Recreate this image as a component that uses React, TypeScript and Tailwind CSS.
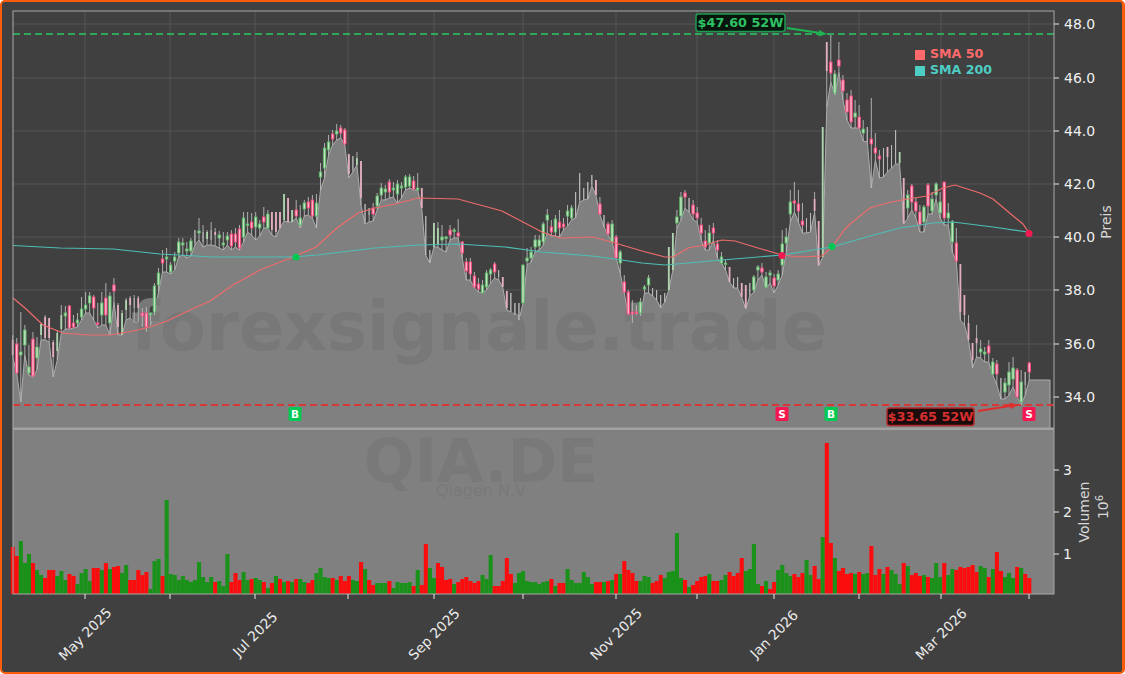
const C: number[][] = [
[340,355,335,357,3],[344,373,338,374,1],[352,355,312,402,0],[330,345,325,355,0],[367,373,345,375,0],[339,376,332,377,1],[347,358,337,370,0],[324,335,323,340,2],[317,338,315,340,3],[318,338,318,342,3],
[342,357,340,377,3],[333,351,330,360,2],[315,329,305,333,2],[313,316,306,329,0],[306,328,305,329,1],[323,327,315,328,1],[320,323,313,327,0],[309,317,297,320,0],[305,309,292,313,0],[296,303,292,313,0],
[297,308,295,320,1],[323,324,303,328,1],[303,315,292,325,0],[298,315,283,325,1],[296,323,292,335,0],[285,291,278,302,1],[305,327,303,335,3],[313,335,310,335,2],[300,310,298,320,2],[298,305,296,318,3],
[298,308,295,322,4],[298,308,296,322,3],[313,316,308,327,1],[313,327,307,332,1],[313,315,313,325,0],[286,312,283,315,0],[273,285,268,292,0],[259,263,250,272,1],[257,259,248,272,0],[265,272,262,274,0],
[257,261,252,270,0],[242,253,238,257,0],[243,245,238,255,0],[249,251,242,258,0],[241,251,238,256,0],[230,243,230,245,4],[231,233,218,240,0],[232,242,225,247,4],[232,239,230,245,2],[230,240,222,245,4],
[232,235,228,246,3],[235,238,231,248,0],[243,245,232,250,0],[236,240,232,245,0],[234,246,230,250,1],[234,242,228,247,1],[229,248,225,250,1],[218,237,212,242,0],[224,225,212,232,0],[222,228,213,235,1],
[217,227,212,240,0],[224,228,220,236,0],[217,222,207,228,1],[214,228,210,228,0],[212,230,212,235,3],[212,232,212,237,3],[212,228,212,228,3],[194,220,194,221,2],[198,222,198,222,3],[210,222,210,222,2],
[210,216,200,218,1],[218,225,205,228,0],[203,209,200,216,0],[202,208,197,215,1],[200,216,195,218,1],[203,216,194,228,0],[172,177,163,190,0],[148,168,143,178,0],[142,150,135,155,0],[134,139,130,145,1],
[131,134,124,140,0],[128,133,125,138,1],[130,144,128,145,1],[154,174,154,178,3],[156,170,156,172,4],[158,165,152,165,2],[161,198,161,205,3],[204,222,204,224,4],[208,215,208,222,4],[208,214,203,221,1],
[196,206,193,210,0],[188,195,183,200,0],[189,192,185,200,0],[182,192,179,198,1],
[188,190,182,197,0],[184,194,180,203,0],[186,188,182,198,0],[177,187,175,190,0],[177,186,174,188,0],[181,189,176,190,1],[188,190,173,190,0],[188,208,188,208,3],[216,255,216,255,4],[250,263,250,263,4],
[223,247,223,247,2],[228,245,222,247,2],[237,240,225,250,0],[237,238,236,252,0],[230,235,225,240,1],[230,231,228,238,0],[233,236,219,238,1],[242,253,241,258,1],[262,271,258,280,1],[262,274,258,280,1],
[276,287,272,288,1],[284,289,278,292,1],[285,293,280,293,0],[273,287,270,290,0],[270,274,268,283,0],[264,272,262,278,1],[270,277,270,280,4],[277,287,277,287,3],[291,308,291,310,3],[293,312,293,312,4],
[303,315,303,315,4],[303,320,303,320,4],[265,303,265,303,0],[258,261,248,265,0],[252,258,247,262,0],[240,247,235,252,0],[240,246,235,250,0],[224,242,222,245,0],[215,220,209,233,0],[227,232,220,236,1],
[219,232,215,236,0],[222,228,210,237,1],[224,227,218,230,1],[211,216,205,226,0],[208,218,205,220,0],[192,218,192,218,4],[173,200,173,202,4],[188,200,188,200,4],[182,199,182,199,4],[175,185,175,186,4],
[180,195,180,195,3],[204,214,197,215,1],[215,227,215,227,4],[224,234,222,235,1],[224,242,220,242,0],[237,258,235,258,1],[252,263,250,273,0],[282,292,275,293,1],[292,314,290,315,1],[312,314,300,323,1],
[312,313,305,315,1],[302,313,298,316,0],[287,289,285,293,0],[278,285,275,293,0],[288,296,288,296,4],[290,300,290,300,4],[295,307,295,308,4],[293,302,293,302,4],[247,290,247,290,2],[233,270,233,270,2],
[217,223,210,228,0],[197,216,192,220,0],[193,197,190,208,1],[198,212,198,212,4],[205,214,200,220,1],[213,218,207,222,1],[225,233,218,240,1],[241,247,230,250,1],[233,243,225,250,0],[228,233,223,240,1],
[244,250,240,258,1],[257,263,252,263,0],[263,264,260,270,0],[267,282,267,282,3],[278,288,278,288,4],[277,288,277,288,4],[283,297,283,297,3],[285,308,285,309,3],[283,295,283,296,4],[277,290,275,292,0],
[267,270,265,280,0],[268,272,263,275,1],[277,287,272,288,0],[273,275,270,283,0],[278,286,274,293,1],[274,280,270,285,0],[244,265,230,275,0],[237,243,228,252,0],[202,214,190,222,0],[201,203,182,212,1],
[204,211,190,222,1],[221,225,203,233,1],[218,227,218,233,4],[213,230,213,232,4],[199,211,192,212,3],[221,265,221,266,3],[127,257,127,257,2],[42,71,42,107,3],[62,73,34,82,1],[74,93,70,95,0],
[60,66,42,72,1],[80,91,75,100,1],[100,112,93,120,1],[96,122,90,128,1],[113,117,100,128,0],[117,128,105,128,1],[129,133,120,141,0],[127,142,127,142,4],[139,144,98,188,1],[148,153,133,160,1],
[156,159,150,178,1],[148,177,148,177,4],[147,157,147,172,3],[145,167,145,168,4],[130,163,130,164,4],[152,163,152,164,2],[178,223,178,224,3],
[195,208,190,218,0],[186,202,184,210,1],[202,211,198,218,1],[212,225,205,232,1],[207,222,205,232,0],[185,206,183,214,1],[199,211,192,214,0],[184,195,182,199,0],[202,213,192,218,0],[182,218,182,225,1],
[213,218,203,225,0],[222,242,220,252,0],[243,261,228,262,1],[264,312,264,320,3],[295,315,295,325,3],[323,340,315,340,3],[343,360,343,368,3],[338,343,325,357,3],[349,352,340,358,0],[352,354,347,362,0],
[346,353,340,362,1],[362,374,358,375,0],[364,374,360,385,1],[378,399,378,399,4],[383,392,378,399,0],[372,385,362,395,0],[368,379,357,387,0],[370,397,368,397,1],[382,402,370,405,0],[372,385,372,395,4],
[363,372,362,380,1],
];
// volume bar tops; negative = red
const V: number[] = [
-547,-556,541,563,554,-563,570,575,-578,-570,-570,576,571,580,-574,-576,584,573,569,581,-568,-568,570,-563,569,-567,-566,573,565,-580,-580,-570,-575,-572,589,561,559,-576,500,574,575,580,576,580,582,580,562,577,582,577,-582,581,586,554,-582,-573,-580,572,580,-579,578,580,-582,588,-583,576,-579,582,-581,582,-579,579,582,-583,-580,573,568,577,578,-578,580,-576,-581,-576,580,581,-562,569,-580,-585,
583,583,583,-581,588,582,583,583,582,-586,570,-585,-544,568,578,-563,-567,-580,-579,584,-582,-579,-577,-581,-583,-581,575,579,555,-586,-586,-581,-558,-574,583,573,571,581,582,582,584,582,581,-579,586,-583,-583,569,580,583,583,572,577,584,-582,-582,582,-581,580,-574,574,-561,-570,-573,-581,581,576,577,-583,-581,-575,578,572,571,533,578,-580,587,-585,-581,-577,-576,574,-581,-581,580,575,-572,-576,-573,-558,571,
569,544,584,-586,581,-589,-582,570,565,573,576,-574,-577,-573,560,575,-566,-579,537,-443,-543,558,-571,-568,-574,-573,574,-572,574,573,-546,-575,-569,574,-567,570,574,584,-563,566,-575,-573,-576,575,-577,578,563,577,-563,575,569,-570,-567,-568,-567,-565,-572,566,568,-577,569,-552,-571,577,573,578,-567,568,-574,-578,
];
const X = (i: number) => 12.7 + 4.05 * i;
const pts = (a: number[][]) => a.map((p) => p.join(",")).join(" ");
const SMA50 = [[13,298],[25,308],[43,325],[63,333],[87,335],[110,335],[133,331],[150,327],[167,321],[190,310],[210,301],[233,285],[260,270],[293,257],[316,247],[337,228],[358,213],[375,208],[395,204],[418,198],[458,199],[502,211],[542,232],[560,238],[593,237],[615,243],[642,251],[665,257],[673,257],[688,248],[705,245],[722,240],[735,241],[758,248],[782,255],[798,257],[822,256],[832,247],[845,229],[850,224],[870,208],[887,203],[907,199],[927,196],[943,188],[955,185],[980,193],[993,199],[1012,215],[1023,224],[1029,233]];
const SMA200 = [[13,245.5],[60,248],[113,249],[160,254],[213,257],[293,257],[317,255],[375,248],[418,245],[458,244],[505,247],[542,252],[592,256],[615,259],[642,263],[665,265],[722,260],[782,255],[832,247],[870,236],[900,228],[933,223],[953,222],[993,227],[1028,232]];
const priceTicks: [string, number][] = [["48.0",24],["46.0",78],["44.0",131],["42.0",184],["40.0",237],["38.0",290],["36.0",344],["34.0",397]];
const volTicks: [string, number][] = [["3",470],["2",512],["1",554]];
const xTicks = [85,170,255,348,434,523,616,697,774,859,941,1029];
const xLabels: [string, number][] = [["May 2025",85],["Jul 2025",255],["Sep 2025",434],["Nov 2025",616],["Jan 2026",774],["Mar 2026",941]];
const badges: [string, number, string][] = [["B",295,"#00c853"],["S",782,"#f5174f"],["B",831,"#00c853"],["S",1029,"#f5174f"]];
const area = C.map((c, i) => [+X(i).toFixed(1), c[3]]);
const candleColors = ["#5cb868", "#f8447a"];
const FONT = "'DejaVu Sans', sans-serif";

export default function App() {
  return (
    <div className="w-[1125px] h-[674px] overflow-hidden rounded-[5px] border-2 border-r-[3px] border-[#f95c0a] bg-[#404040]">
      <svg width={1120} height={670} viewBox="2 2 1120 670" fontFamily={FONT} className="block">
        {/* grid */}
        {priceTicks.map(([, y]) => (
          <line key={y} x1={13} x2={1054} y1={y} y2={y} stroke="#5c5c5c" strokeWidth={0.8} />
        ))}
        {xTicks.map((x) => (
          <line key={x} x1={x} x2={x} y1={11} y2={428} stroke="#5c5c5c" strokeWidth={0.8} />
        ))}
        {/* area */}
        <polygon points={`13,594 ${pts(area)} 1050,380 1050,428 1054,428 1054,594`} fill="#808080" />
        <polyline points={`${pts(area)} 1050,380 1050,428`} fill="none" stroke="#acacac" strokeWidth={1} />
        {/* watermarks */}
        <text x={479} y={350} textAnchor="middle" fontSize={66.8} fontWeight={700} fill="#787878">forexsignale.trade</text>
        <text x={481} y={482} textAnchor="middle" fontSize={60} fontWeight={700} fill="#797979">QIA.DE</text>
        <text x={481} y={496} textAnchor="middle" fontSize={16} fill="#797979">Qiagen N.V</text>
        {/* candles */}
        {C.map(([t, b, h, l, k], i) => {
          const x = X(i);
          if (k >= 2) {
            const col = k === 2 ? "#aed4ae" : k === 3 ? "#e3aebd" : "#bdbdbd";
            return (
              <g key={i}>
                <line x1={x} x2={x} y1={h} y2={l} stroke="#b8b8b8" strokeWidth={0.9} />
                <rect x={x - (k === 4 ? 0.45 : 0.9)} y={t} width={k === 4 ? 0.9 : 1.8} height={b - t} fill={col} />
              </g>
            );
          }
          return (
            <g key={i}>
              <line x1={x} x2={x} y1={h} y2={l} stroke="#bcbcbc" strokeWidth={0.9} />
              <rect x={x - 1.2} y={t} width={2.4} height={Math.max(b - t, 1.5)} fill={k === 0 ? "#c4e2c4" : "#f9b6c9"} stroke={candleColors[k]} strokeWidth={0.9} />
            </g>
          );
        })}
        {/* moving averages */}
        <polyline points={pts(SMA50)} fill="none" stroke="#ee6b6b" strokeWidth={1.2} />
        <polyline points={pts(SMA200)} fill="none" stroke="#4ebdb5" strokeWidth={1.2} />
        {/* 52W lines */}
        <line x1={13} x2={1054} y1={34} y2={34} stroke="#2fa85c" strokeWidth={1.8} strokeDasharray="7 4" />
        <line x1={13} x2={1054} y1={405} y2={405} stroke="#d63838" strokeWidth={1.8} strokeDasharray="7 4" />
        {/* signals */}
        <circle cx={296} cy={257} r={3.5} fill="#00c853" />
        <circle cx={782} cy={255.5} r={3.5} fill="#f5174f" />
        <circle cx={832} cy={246.5} r={3.5} fill="#00c853" />
        <circle cx={1029} cy={233.5} r={3.5} fill="#f5174f" />
        {badges.map(([t, x, c]) => (
          <g key={x}>
            <rect x={x - 6.5} y={407} width={13} height={14} rx={1.5} fill={c} />
            <text x={x} y={418} textAnchor="middle" fontSize={10.5} fontWeight={700} fill="#ffffff">{t}</text>
          </g>
        ))}
        {/* panel divider, volume */}
        <rect x={13} y={427.5} width={1041} height={2.5} fill="#a2a2a2" />
        {V.map((v, i) => (
          <rect key={i} x={X(i) - 2} y={Math.abs(v)} width={4.1} height={594 - Math.abs(v)} fill={v < 0 ? "#fc0d0d" : "#1a921a"} />
        ))}
        {/* spines */}
        <rect x={13} y={11} width={1041} height={583} fill="none" stroke="#a8a8a8" strokeWidth={1} />
        {/* ticks */}
        {priceTicks.map(([s, y]) => (
          <g key={y}>
            <line x1={1054} x2={1059} y1={y} y2={y} stroke="#e8e8e8" />
            <text x={1064} y={y + 5} fontSize={14} fill="#f0f0f0">{s}</text>
          </g>
        ))}
        {volTicks.map(([s, y]) => (
          <g key={y}>
            <line x1={1054} x2={1059} y1={y} y2={y} stroke="#e8e8e8" />
            <text x={1063} y={y + 5} fontSize={14} fill="#f0f0f0">{s}</text>
          </g>
        ))}
        {xTicks.map((x) => (
          <line key={x} x1={x} x2={x} y1={594} y2={599} stroke="#e8e8e8" />
        ))}
        {xLabels.map(([s, x]) => (
          <text key={s} x={x} y={639} textAnchor="middle" fontSize={13.8} fill="#ececec" transform={`rotate(-45 ${x} 634)`}>{s}</text>
        ))}
        <text x={1111} y={222} textAnchor="middle" fontSize={14} fill="#d8d8d8" transform="rotate(-90 1111 222)">Preis</text>
        <text x={1089} y={512} textAnchor="middle" fontSize={14} fill="#d8d8d8" transform="rotate(-90 1089 512)">Volumen</text>
        <text x={1108} y={507} textAnchor="middle" fontSize={14} fill="#d8d8d8" transform="rotate(-90 1108 507)">10<tspan fontSize={10} dy={-5}>6</tspan></text>
        {/* legend */}
        <rect x={915} y={50} width={10} height={10} fill="#ff6b6b" />
        <text x={930} y={58} fontSize={12.6} fontWeight={700} fill="#ff6b6b">SMA 50</text>
        <rect x={915} y={66} width={10} height={10} fill="#4ecdc4" />
        <text x={930} y={74} fontSize={12.6} fontWeight={700} fill="#4ecdc4">SMA 200</text>
        {/* annotations */}
        <rect x={696} y={14} width={89} height={17.5} rx={2.5} fill="#07150c" stroke="#1f9a50" strokeWidth={1.5} />
        <text x={740.5} y={27} textAnchor="middle" fontSize={12.8} fontWeight={700} fill="#2fc163">$47.60 52W</text>
        <line x1={787} y1={28} x2={820} y2={33} stroke="#1fb552" strokeWidth={1.8} />
        <polygon points="827,34 819,30 818.5,36.5" fill="#1fb552" />
        <rect x={887} y={408} width={87} height={17.5} rx={2.5} fill="#1c0b0b" stroke="#b32a2a" strokeWidth={1.5} />
        <text x={930.5} y={421} textAnchor="middle" fontSize={12.8} fontWeight={700} fill="#d62f2f">$33.65 52W</text>
        <line x1={978} y1={411} x2={1010} y2={406} stroke="#e02d2d" strokeWidth={1.8} />
        <polygon points="1018,405 1009.5,402.5 1010.5,409" fill="#e02d2d" />
      </svg>
    </div>
  );
}
